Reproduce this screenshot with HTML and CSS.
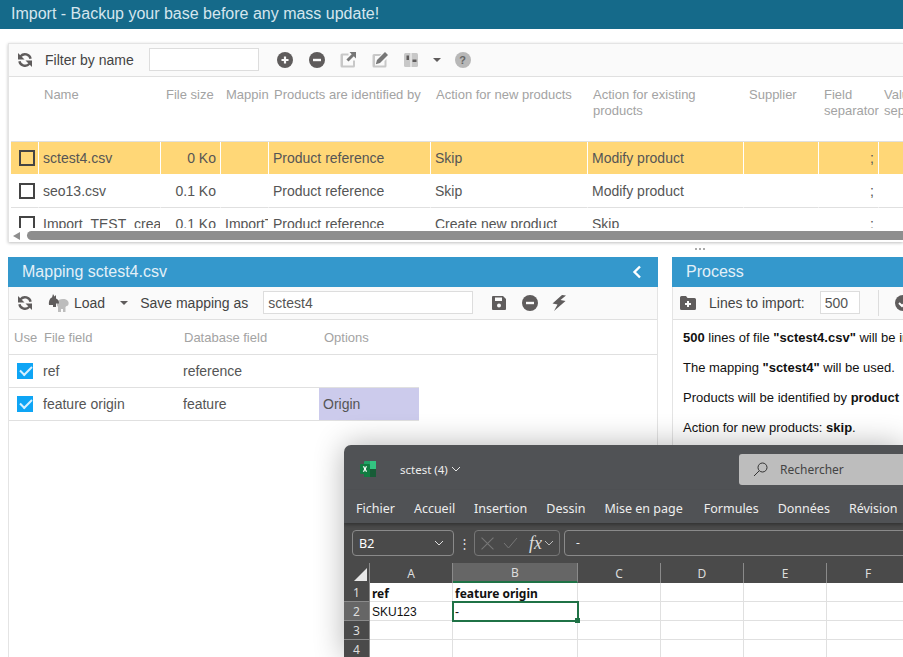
FILE: index.html
```html
<!DOCTYPE html>
<html lang="en">
<head>
    <meta charset="UTF-8">
    <meta name="viewport" content="width=device-width, initial-scale=1.0">
    <title>Import</title>
    <link rel="stylesheet" href="styles.css">
</head>
<body>
    <header class="page-title">Import - Backup your base before any mass update!</header>

    <main class="content">
        <section class="import-list">
            <div class="toolbar">
                <svg class="icon refresh" viewBox="0 0 16 16"><path class="arc" d="M13.600 6.800A5.800 5.800 0 0 0 3.600 4.200"/><path d="M1 1v6.500h6.500z"/><path class="arc" d="M2.400 9.200A5.800 5.800 0 0 0 12.400 11.800"/><path d="M15 15V8.500H8.500z"/></svg>
                <label class="tb-label filter-label">Filter by name</label>
                <input class="tb-input filter-input" type="text">
                <svg class="icon add" viewBox="0 0 16 16"><circle cx="8" cy="8" r="8"/><path class="cut" d="M4.500 6.900h2.400V4.500h2.200v2.400h2.400v2.200H9.100v2.400H6.900V9.100H4.500z"/></svg>
                <svg class="icon remove" viewBox="0 0 16 16"><circle cx="8" cy="8" r="8"/><rect class="cut" x="4" y="6.800" width="8" height="2.400"/></svg>
                <svg class="icon light open" viewBox="0 0 16 16"><path d="M2 1.500h6.500v2H3v10h10V8.500h2V14a1.500 1.500 0 0 1-1.500 1.500H2A1.500 1.500 0 0 1 .5 14V3A1.500 1.500 0 0 1 2 1.500z"/><path class="mid" d="M9.500 0H16v6.500l-2.200-2.200-5.300 5.300-2.100-2.100 5.300-5.300z"/></svg>
                <svg class="icon light edit" viewBox="0 0 16 16"><path d="M2 2h7.500l-2 2H3v9.500h9.500V9l2-2v7a1.500 1.500 0 0 1-1.500 1.500H2A1.500 1.500 0 0 1 .5 14V3.500A1.500 1.500 0 0 1 2 2z"/><path class="mid" d="M13 0l3 3-8 8-4.200 1.200L5 8z"/></svg>
                <svg class="icon light columns" viewBox="0 0 14 14"><rect width="14" height="14" rx="1.500"/><rect class="dark" x="2.500" y="2.500" width="2.500" height="4.500"/><rect class="cut" x="6.500" width="1" height="14"/><rect class="dark" x="8.500" y="6.500" width="4" height="2.500"/></svg>
                <span class="caret"></span>
                <span class="help">?</span>
            </div>
            <div class="table-clip">
                <table class="grid files">
                    <colgroup>
                        <col class="c-check"><col class="c-name"><col class="c-size"><col class="c-map"><col class="c-ident">
                        <col class="c-new"><col class="c-exist"><col class="c-supp"><col class="c-sep"><col class="c-val">
                    </colgroup>
                    <thead>
                        <tr>
                            <th></th><th>Name</th><th>File size</th><th>Mappin</th><th>Products are identified by</th>
                            <th>Action for new products</th><th>Action for existing products</th><th>Supplier</th><th>Field separator</th><th>Value separator</th>
                        </tr>
                    </thead>
                    <tbody>
                        <tr class="selected">
                            <td><span class="box"></span></td><td>sctest4.csv</td><td class="num">0 Ko</td><td></td><td>Product reference</td>
                            <td>Skip</td><td>Modify product</td><td></td><td class="num">;</td><td></td>
                        </tr>
                        <tr>
                            <td><span class="box"></span></td><td>seo13.csv</td><td class="num">0.1 Ko</td><td></td><td>Product reference</td>
                            <td>Skip</td><td>Modify product</td><td></td><td class="num">;</td><td></td>
                        </tr>
                        <tr>
                            <td><span class="box"></span></td><td>Import_TEST_creation.csv</td><td class="num">0.1 Ko</td><td>ImportTest</td><td>Product reference</td>
                            <td>Create new product</td><td>Skip</td><td></td><td class="num">;</td><td></td>
                        </tr>
                    </tbody>
                </table>
            </div>
            <div class="scrollbar">
                <span class="arrow"></span>
                <span class="thumb"></span>
            </div>
        </section>

        <div class="handle"><i></i><i></i><i></i></div>

        <div class="panels">
            <section class="panel mapping">
                <h2 class="panel-title">Mapping sctest4.csv
                    <svg class="chevron" viewBox="0 0 10 14"><path d="M8 1.500L2.500 7 8 12.500" fill="none" stroke="#fff" stroke-width="2.400"/></svg>
                </h2>
                <div class="toolbar">
                    <svg class="icon refresh" viewBox="0 0 16 16"><path class="arc" d="M13.600 6.800A5.800 5.800 0 0 0 3.600 4.200"/><path d="M1 1v6.500h6.500z"/><path class="arc" d="M2.400 9.200A5.800 5.800 0 0 0 12.400 11.800"/><path d="M15 15V8.500H8.500z"/></svg>
                    <svg class="icon elephant" viewBox="0 0 21 18"><path class="light-fill" d="M9 8c1-2 3-3 6-3 2 0 3 .5 4 1l1.500 2c.5 2.500-.5 4-2 4l-1 1v5h-2.500v-3h-2v3H10v-5C9 12 8.500 10 9 8z"/><path d="M1 11C.5 7 2 4 4 3.500L5 0l1.500 2.500L8 1v3.500c2 .5 3 2.500 3 5H8V13H5v-2z"/></svg>
                    <span class="tb-label load-label">Load</span>
                    <span class="caret"></span>
                    <label class="tb-label save-label">Save mapping as</label>
                    <input class="tb-input mapping-input" type="text" value="sctest4">
                    <svg class="icon save" viewBox="0 0 16 16"><path d="M2 1h10l3 3v10a1 1 0 0 1-1 1H2a1 1 0 0 1-1-1V2a1 1 0 0 1 1-1z"/><rect class="cut" x="4" y="2.500" width="7" height="3.500"/><circle class="cut" cx="8" cy="10.500" r="2"/></svg>
                    <svg class="icon remove" viewBox="0 0 16 16"><circle cx="8" cy="8" r="8"/><rect class="cut" x="4" y="6.800" width="8" height="2.400"/></svg>
                    <svg class="icon bolt" viewBox="0 0 16 16"><path d="M11 0L1.500 8.500l5 1L3 16 14.500 6l-5-1L15 .5z"/></svg>
                </div>
                <table class="grid fields">
                    <colgroup><col class="f-use"><col class="f-file"><col class="f-db"><col class="f-opt"><col></colgroup>
                    <thead>
                        <tr><th class="use">Use</th><th>File field</th><th>Database field</th><th>Options</th><th></th></tr>
                    </thead>
                    <tbody>
                        <tr><td><span class="box on"></span></td><td>ref</td><td>reference</td><td></td></tr>
                        <tr><td><span class="box on"></span></td><td>feature origin</td><td>feature</td><td class="origin">Origin</td></tr>
                    </tbody>
                </table>
            </section>

            <section class="panel process">
                <h2 class="panel-title">Process</h2>
                <div class="toolbar">
                    <svg class="icon folder" viewBox="0 0 16 14"><path d="M1.500 0H6l1.500 2h7A1.500 1.500 0 0 1 16 3.500v9a1.500 1.500 0 0 1-1.500 1.500h-13A1.500 1.500 0 0 1 0 12.500v-11A1.500 1.500 0 0 1 1.500 0z"/><path class="cut" d="M5 7h2V5h2v2h2v2H9v2H7V9H5z"/></svg>
                    <label class="tb-label lines-label">Lines to import:</label>
                    <input class="tb-input lines-input" type="text" value="500">
                    <span class="tb-sep"></span>
                    <svg class="icon check-round" viewBox="0 0 16 16"><circle cx="8" cy="8" r="8"/><path d="M4 8l3 3 5-5" fill="none" stroke="#fff" stroke-width="2"/></svg>
                </div>
                <div class="summary">
                    <p><b>500</b> lines of file <b>"sctest4.csv"</b> will be imported.</p>
                    <p>The mapping <b>"sctest4"</b> will be used.</p>
                    <p>Products will be identified by <b>product reference</b>.</p>
                    <p>Action for new products: <b>skip</b>.</p>
                </div>
            </section>
        </div>
    </main>

    <!-- fenetre excel par dessus la page -->
    <div class="excel">
        <div class="xl-title">
            <svg class="xl-logo" viewBox="0 0 16 16">
                <rect x="4" y="0" width="12" height="16" rx="1" fill="#21a366"/>
                <rect x="10" y="0" width="6" height="8" fill="#33c481"/>
                <rect x="4" y="8" width="6" height="8" fill="#107c41"/>
                <rect x="10" y="8" width="6" height="8" fill="#185c37"/>
                <rect x="0" y="3" width="10" height="10" rx="1" fill="#107c41"/>
                <path d="M2.800 5.200h1.400L5 7l.8-1.800h1.300L5.800 8l1.400 2.800H5.800L5 9l-.8 1.800H2.800L4.200 8z" fill="#fff"/>
            </svg>
            <span class="xl-name">sctest (4)</span>
            <svg class="xl-down" viewBox="0 0 10 6"><path d="M1 1l4 4 4-4" fill="none" stroke="#e6e6e6" stroke-width="1"/></svg>
            <div class="xl-search">
                <svg viewBox="0 0 16 16"><circle cx="9.500" cy="6.500" r="4.500" fill="none" stroke="#333" stroke-width="1"/><path d="M6 10l-5 5" stroke="#333" stroke-width="1"/></svg>
                <span>Rechercher</span>
            </div>
        </div>
        <nav class="xl-menu">
            <span>Fichier</span><span>Accueil</span><span>Insertion</span><span>Dessin</span><span>Mise en page</span><span class="xl-wide">Formules</span><span>Données</span><span>Révision</span>
        </nav>
        <div class="xl-formula">
            <div class="xl-namebox">B2
                <svg viewBox="0 0 10 6"><path d="M1 1l4 4 4-4" fill="none" stroke="#ddd" stroke-width="1"/></svg>
            </div>
            <span class="xl-dots">⋮</span>
            <div class="xl-fx">
                <svg class="x" viewBox="0 0 12 12"><path d="M.5.5l11 11M11.500.5l-11 11" stroke="#777" stroke-width="1"/></svg>
                <svg class="ok" viewBox="0 0 15 12"><path d="M1 6l4.500 5L14 1" fill="none" stroke="#777" stroke-width="1"/></svg>
                <i>fx</i>
                <svg class="small" viewBox="0 0 10 6"><path d="M1 1l4 4 4-4" fill="none" stroke="#bbb" stroke-width="1"/></svg>
            </div>
            <div class="xl-input">-</div>
        </div>
        <div class="xl-sheet">
            <div class="hd corner"><span></span></div>
            <div class="hd">A</div><div class="hd on">B</div><div class="hd">C</div><div class="hd">D</div><div class="hd">E</div><div class="hd">F</div>

            <div class="rh">1</div>
            <div class="cell bold">ref</div><div class="cell bold">feature origin</div><div class="cell"></div><div class="cell"></div><div class="cell"></div><div class="cell"></div>

            <div class="rh on">2</div>
            <div class="cell">SKU123</div><div class="cell active">-</div><div class="cell"></div><div class="cell"></div><div class="cell"></div><div class="cell"></div>

            <div class="rh">3</div>
            <div class="cell"></div><div class="cell"></div><div class="cell"></div><div class="cell"></div><div class="cell"></div><div class="cell"></div>

            <div class="rh">4</div>
            <div class="cell"></div><div class="cell"></div><div class="cell"></div><div class="cell"></div><div class="cell"></div><div class="cell"></div>
        </div>
    </div>
</body>
</html>
```

FILE: styles.css
```css
* {
    margin: 0;
    padding: 0;
    box-sizing: border-box;
}

html, body {
    height: 657px;
    overflow: hidden;
}

body {
    position: relative;
    font-family: "Liberation Sans", Arial, sans-serif;
    font-size: 14px;
    color: #555;
    background: #fff;
}

.page-title {
    height: 29px;
    line-height: 28px;
    padding-left: 11px;
    font-size: 16px;
    color: #d5e6ee;
    background: #156a8a;
}

.content {
    padding: 14px 0 0 8px;
}

/* Barres d'outils */
.toolbar {
    display: flex;
    align-items: center;
    height: 33px;
    padding-bottom: 1px;
    background: #fafafa;
    border-bottom: 1px solid #e0e0e0;
    white-space: nowrap;
    overflow: hidden;
}

.icon {
    flex: none;
    width: 16px;
    height: 16px;
    fill: #5f5c5c;
}

.icon .cut { fill: #fafafa; }
.icon .dark { fill: #5f5c5c; }
.icon .mid { fill: #777; }
.icon.light { fill: #c8c8c8; }
.icon .light-fill { fill: #bdbdbd; }
.icon .arc { fill: none; stroke: #5f5c5c; stroke-width: 2.400; }

.tb-label {
    color: #444;
}

.tb-input {
    height: 23px;
    border: 1px solid #ddd;
    background: #fff;
    font: 14px "Liberation Sans", Arial, sans-serif;
    color: #555;
    padding: 0 4px;
}

.caret {
    flex: none;
    width: 0;
    height: 0;
    border-left: 4px solid transparent;
    border-right: 4px solid transparent;
    border-top: 4px solid #5f5c5c;
}

.help {
    flex: none;
    width: 16px;
    height: 16px;
    border-radius: 50%;
    background: #b8b8b8;
    color: #666;
    font-size: 11px;
    font-weight: bold;
    line-height: 16px;
    text-align: center;
}

/* Liste des imports */
.import-list {
    width: 895px;
    height: 199px;
    border-top: 1px solid #e4e4e4;
    border-left: 1px solid #e4e4e4;
    box-shadow: 0 1px 3px rgba(0, 0, 0, 0.25);
}

.import-list .refresh { margin-left: 8px; }
.filter-label { margin-left: 12px; }
.filter-input { width: 110px; margin-left: 15px; }
.import-list .add { margin-left: 18px; }
.import-list .remove { margin-left: 16px; }
.import-list .open { margin-left: 15px; }
.import-list .edit { margin-left: 16px; }
.import-list .columns { margin-left: 16px; width: 14px; height: 14px; }
.import-list .caret { margin-left: 15px; }
.import-list .help { margin-left: 14px; }

.table-clip {
    height: 151px;
    margin-bottom: 3px;
    overflow: hidden;
}

.grid {
    border-collapse: separate;
    border-spacing: 0;
    table-layout: fixed;
}

.grid th {
    font-size: 13px;
    font-weight: normal;
    text-align: left;
    color: #a3a3a3;
    vertical-align: top;
    line-height: 16px;
}

.grid td {
    white-space: nowrap;
    overflow: hidden;
    color: #555;
}

.files {
    width: 930px;
    margin-left: 2px;
}

.files th {
    height: 65px;
    padding: 10px 0 0 5px;
    background: #fff;
    border-bottom: 1px solid #e0e0e0;
    overflow: hidden;
}

.files td {
    height: 33px;
    padding: 0 4px;
    border-right: 1px solid #fff;
    border-bottom: 1px solid #e0e0e0;
}

.files .selected td {
    background: #ffd777;
    border-bottom-color: #fff;
}

.files .num { text-align: right; }

.c-check { width: 28px; }
.c-name { width: 122px; }
.c-size { width: 60px; }
.c-map { width: 48px; }
.c-ident { width: 162px; }
.c-new { width: 157px; }
.c-exist { width: 156px; }
.c-supp { width: 75px; }
.c-sep { width: 60px; }
.c-val { width: 62px; }

.box {
    display: block;
    width: 16px;
    height: 16px;
    margin-left: 4px;
    border: 2px solid #444;
    background: transparent;
}

.box.on {
    border: 0;
    background: #0ea5f5;
    position: relative;
}

.box.on::after {
    content: "";
    position: absolute;
    left: 3px;
    top: 3px;
    width: 10px;
    height: 5px;
    border-left: 2px solid #d8f0ff;
    border-bottom: 2px solid #d8f0ff;
    transform: rotate(-45deg);
}

.scrollbar {
    display: flex;
    align-items: center;
    height: 9px;
}

.scrollbar .arrow {
    flex: none;
    width: 0;
    height: 0;
    margin-left: 4px;
    border-top: 4px solid transparent;
    border-bottom: 4px solid transparent;
    border-right: 7px solid #8e8e8e;
}

.scrollbar .thumb {
    flex: 1;
    height: 9px;
    margin-left: 7px;
    border-radius: 5px 0 0 5px;
    background: #8e8e8e;
}

.handle {
    display: flex;
    gap: 2px;
    height: 15px;
    padding: 6px 0 0 687px;
}

.handle i {
    width: 2px;
    height: 2px;
    background: #aaa;
}

/* Panneaux du bas */
.panels {
    display: flex;
    gap: 14px;
}

.panel {
    flex: none;
    height: 400px;
    border-left: 1px solid #e4e4e4;
}

.mapping { width: 650px; border-right: 1px solid #e4e4e4; }
.process { width: 231px; }

.panel-title {
    display: flex;
    justify-content: space-between;
    align-items: center;
    height: 30px;
    margin: 0 -1px;
    padding: 0 16px 0 14px;
    font-size: 16px;
    font-weight: normal;
    color: #e3f0f8;
    background: #3498cc;
}

.process .panel-title { margin-right: 0; }

.chevron {
    width: 10px;
    height: 14px;
}

.mapping .refresh { margin-left: 8px; }
.mapping .elephant { margin-left: 15px; width: 21px; height: 18px; }
.load-label { margin-left: 5px; }
.mapping .caret { margin-left: 15px; }
.save-label { margin-left: 12px; }
.mapping-input { width: 210px; margin-left: 15px; }
.mapping .save { margin-left: 18px; }
.mapping .remove { margin-left: 15px; }
.mapping .bolt { margin-left: 13px; }

.fields { width: 100%; }

.fields th {
    height: 35px;
    padding: 10px 0 0 5px;
    border-bottom: 1px solid #e0e0e0;
}

.fields td {
    height: 33px;
    padding: 0 4px;
    border-bottom: 1px solid #e0e0e0;
}

.fields .origin { background: #cccbec; }

.f-use { width: 30px; }
.f-file { width: 140px; }
.f-db { width: 140px; }
.f-opt { width: 100px; }

.process .folder { margin-left: 7px; width: 16px; height: 14px; }
.lines-label { margin-left: 13px; }
.lines-input { width: 40px; margin-left: 15px; padding-left: 4px; }
.tb-sep { flex: none; width: 1px; height: 26px; margin-left: 18px; background: #ddd; }
.check-round { margin-left: 16px; }

.summary {
    padding: 10px 0 0 10px;
    font-size: 13px;
    color: #111;
    white-space: nowrap;
    overflow: hidden;
}

.summary p {
    line-height: 16px;
    margin-bottom: 14px;
}

/* Fenetre excel */
.excel {
    position: absolute;
    left: 344px;
    top: 445px;
    width: 559px;
    height: 212px;
    border-radius: 7px 0 0 0;
    overflow: hidden;
    background: #505255;
    box-shadow: 0 0 30px rgba(0, 0, 0, 0.3);
    font-family: "Noto Sans", "Open Sans", sans-serif;
    color: #eee;
}

.xl-title {
    display: flex;
    align-items: center;
    height: 45px;
    padding-top: 3px;
}

.xl-logo {
    flex: none;
    width: 16px;
    height: 16px;
    margin-left: 16px;
}

.xl-name {
    flex: none;
    width: 50px;
    margin-left: 24px;
    font-size: 11.500px;
    white-space: nowrap;
}

.xl-down {
    flex: none;
    width: 10px;
    height: 6px;
    margin-left: 1px;
}

.xl-search {
    display: flex;
    flex: none;
    align-items: center;
    width: 300px;
    height: 31px;
    margin-left: 278px;
    border-radius: 3px;
    background: #bdbdbd;
    color: #444;
    font-size: 12px;
}

.xl-search svg {
    width: 16px;
    height: 16px;
    margin-left: 14px;
}

.xl-search span { margin-left: 11px; }

.xl-menu {
    display: flex;
    gap: 19px;
    align-items: center;
    height: 33px;
    padding: 3px 0 0 12px;
    font-size: 12.500px;
    white-space: nowrap;
    box-shadow: 0 2px 3px rgba(0, 0, 0, 0.3);
    position: relative;
}

.xl-wide { margin-left: 2px; }

.xl-formula {
    display: flex;
    align-items: center;
    height: 40px;
    background: #4a4a4a;
    padding-left: 8px;
}

.xl-namebox {
    display: flex;
    flex: none;
    justify-content: space-between;
    align-items: center;
    width: 102px;
    height: 26px;
    padding: 0 9px 0 6px;
    border: 1px solid #8a8a8a;
    border-radius: 4px;
    font-size: 12.500px;
    color: #fff;
}

.xl-namebox svg {
    width: 10px;
    height: 6px;
}

.xl-dots {
    flex: none;
    width: 20px;
    text-align: center;
    font-size: 13px;
    color: #ddd;
}

.xl-fx {
    display: flex;
    flex: none;
    align-items: center;
    width: 86px;
    height: 26px;
    padding-left: 6px;
    border: 1px solid #777;
    border-radius: 4px;
}

.xl-fx .x { width: 13px; height: 13px; }
.xl-fx .ok { width: 15px; height: 12px; margin-left: 9px; }
.xl-fx .small { width: 10px; height: 6px; margin-left: 2px; }

.xl-fx i {
    margin-left: 11px;
    font-family: "Liberation Serif", serif;
    font-size: 18px;
    color: #ddd;
}

.xl-input {
    flex: none;
    width: 400px;
    height: 26px;
    margin-left: 4px;
    padding-left: 11px;
    line-height: 24px;
    border: 1px solid #8a8a8a;
    border-radius: 4px;
    font-size: 12px;
}

.xl-sheet {
    display: grid;
    grid-template-columns: 26px 83px 125px 83px 83px 83px 83px;
    grid-template-rows: 20px 19px 19px 19px 19px;
    background: #fff;
}

.hd, .rh {
    display: flex;
    align-items: center;
    justify-content: center;
    background: #4a4a4a;
    color: #ddd;
    font-size: 12px;
    border-right: 1px solid #8a8a8a;
}

.hd.on, .rh.on { background: #666; }
.hd.on { border-bottom: 2px solid #1f7246; }

.corner {
    justify-content: flex-end;
    align-items: flex-end;
    padding: 0 2px 2px 0;
}

.corner span {
    width: 0;
    height: 0;
    border-left: 13px solid transparent;
    border-bottom: 13px solid #e8e8e8;
}

.rh {
    padding-top: 1px;
    border-bottom: 1px solid #8a8a8a;
}

.cell {
    padding-left: 2px;
    line-height: 21px;
    font-family: "Liberation Sans", Arial, sans-serif;
    font-size: 12px;
    color: #111;
    white-space: nowrap;
    border-right: 1px solid #e0e0e0;
    border-bottom: 1px solid #e0e0e0;
}

.cell.bold {
    font-family: "Noto Sans", sans-serif;
    font-weight: bold;
}

.cell.active {
    position: relative;
    outline: 2px solid #1f7246;
    outline-offset: -1px;
}

.cell.active::after {
    content: "";
    position: absolute;
    right: -3px;
    bottom: -3px;
    width: 5px;
    height: 5px;
    background: #1f7246;
}
```
